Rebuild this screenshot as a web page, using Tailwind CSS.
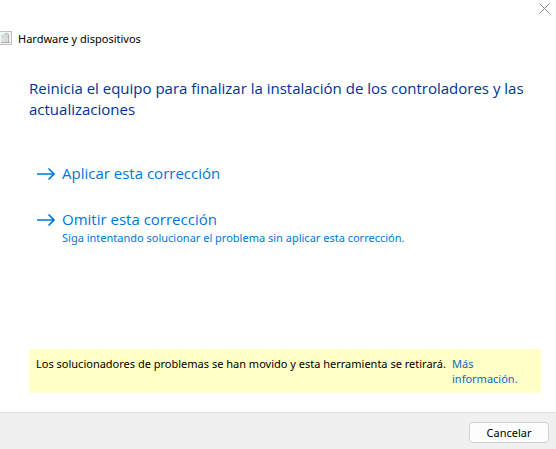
<!DOCTYPE html>
<html lang="es">
<head>
    <meta charset="UTF-8" />
    <meta name="viewport" content="width=device-width, initial-scale=1.0" />
    <script src="https://cdn.jsdelivr.net/npm/@tailwindcss/browser@4"></script>
    <title>Hardware y dispositivos</title>
</head>
<body class="min-h-screen flex flex-col bg-white text-black font-['Noto_Sans',sans-serif] text-[11px] leading-[15px]">

    <!-- Barra de título -->
    <div class="flex justify-end h-7 pr-1.5 pt-[3px]">
        <button type="button" aria-label="Cerrar" class="w-[11px] h-[11px]">
            <svg viewBox="0 0 11 11" class="w-[11px] h-[11px]" fill="none" stroke="#858585" stroke-width="1">
                <path d="M.5 .5L10.500 10.500M10.500 .5L.5 10.500" />
            </svg>
        </button>
    </div>

    <header class="flex items-center gap-1.5 h-5">
        <svg viewBox="0 0 12 14" class="w-3 h-3.5" fill="none">
            <rect x="-3" y=".5" width="14.500" height="13" fill="#f4f4f4" stroke="#c0c0c0" />
            <path d="M1 4l3-1v8H1z" fill="#dfe6df" />
            <path d="M4 3.500L7 2.500l1 1V11H4z" fill="#dadada" />
            <path d="M4.500 3.500L7 2.500l1.500 1V11M1 11.500h9" stroke="#aeaeae" />
            <path d="M2 5.500h1" stroke="#8fc48f" />
        </svg>
        <h2>Hardware y dispositivos</h2>
    </header>

    <main class="flex-1 pl-[29px] pr-[15px] pt-[30px]">
        <h1 class="font-['Open_Sans',sans-serif] text-[15px] leading-[21px] text-[#003399]">Reinicia el equipo para finalizar la instalación de los controladores y las actualizaciones</h1>

        <!-- Opciones -->
        <div class="flex flex-col gap-6 pt-[42px] pl-2 text-[#0078d7]">
            <button type="button" class="flex items-start gap-[7px] text-left">
                <svg viewBox="0 0 18 22" class="w-[18px] h-[22px]" fill="none" stroke="currentColor" stroke-width="1.600">
                    <path d="M0 12H17M11.500 6.500L17 12L11.500 17.500" />
                </svg>
                <span class="font-['Open_Sans',sans-serif] text-[15px] leading-[22px]">Aplicar esta corrección</span>
            </button>
            <button type="button" class="flex items-start gap-[7px] text-left">
                <svg viewBox="0 0 18 22" class="w-[18px] h-[22px]" fill="none" stroke="currentColor" stroke-width="1.600">
                    <path d="M0 12H17M11.500 6.500L17 12L11.500 17.500" />
                </svg>
                <span>
                    <span class="block font-['Open_Sans',sans-serif] text-[15px] leading-[22px]">Omitir esta corrección</span>
                    <span class="block">Siga intentando solucionar el problema sin aplicar esta corrección.</span>
                </span>
            </button>
        </div>

        <!-- Aviso -->
        <div class="flex gap-1.5 mt-[104px] mb-[19px] bg-[#ffffc6] pl-[7px] pr-3 py-[7px]">
            <p class="whitespace-nowrap">Los solucionadores de problemas se han movido y esta herramienta se retirará.</p>
            <a href="#" class="text-[#0f66cc]">Más información.</a>
        </div>
    </main>

    <footer class="flex justify-end border-t border-[#dfdfdf] bg-[#f0f0f0] pt-[9px] pb-1.5 pr-[7px]">
        <button type="button" class="w-20 h-[21px] rounded-[4px] border border-[#d0d0d0] bg-[#fdfdfd]">Cancelar</button>
    </footer>

</body>
</html>
